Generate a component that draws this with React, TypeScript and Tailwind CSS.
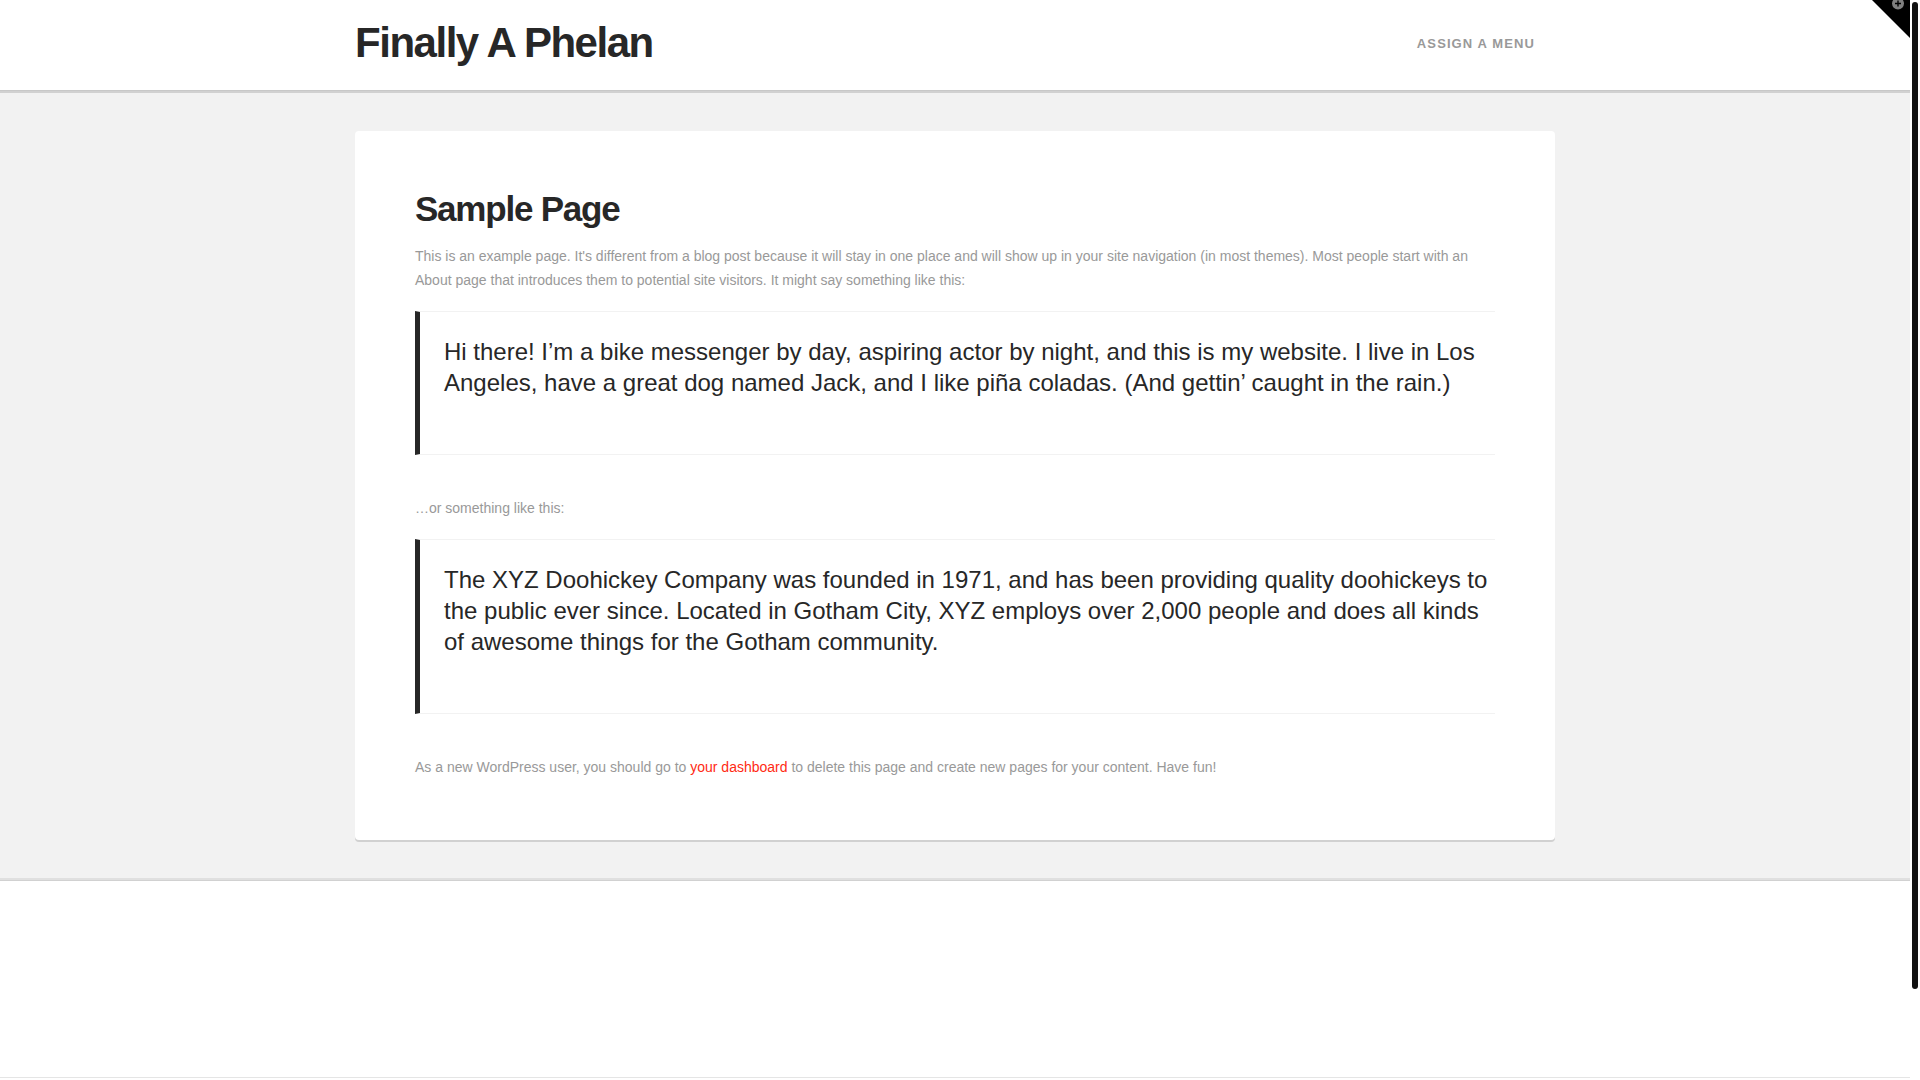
import type { ReactNode } from "react";

function Quote({ children }: { children: ReactNode }) {
  return (
    <blockquote className="mb-[41px] border border-r-0 border-l-[5px] border-[#f2f2f2] border-l-[#272727] pt-6 pb-14 pl-6 text-2xl leading-[31px] text-[#272727]">
      <p>{children}</p>
    </blockquote>
  );
}

function Header() {
  return (
    <header className="border-b border-[#c8c8c8] bg-white">
      <div className="mx-auto flex h-[90px] max-w-[1200px] items-center justify-between pb-1">
        <a href="#home" className="text-[42px] leading-[42px] font-bold tracking-[-0.035em] text-[#272727]">
          Finally A Phelan
        </a>
        <nav className="px-5">
          <a href="#menu" className="text-[13px] font-bold tracking-[0.085em] text-[#999999] uppercase">
            Assign a menu
          </a>
        </nav>
      </div>
    </header>
  );
}

export default function App() {
  return (
    <div className="flex h-screen overflow-hidden bg-white font-['Liberation_Sans',Arial,sans-serif] text-sm leading-6 text-[#999999]">
      <div className="relative min-w-0 flex-1">
        <Header />

        <main className="border-t-2 border-b-2 border-t-[#d1d1d1] border-b-[#e0e0e0] bg-[#f2f2f2] py-[38px]">
          <article className="mx-auto max-w-[1200px] rounded-sm bg-white px-[60px] pt-[60px] pb-[61px] shadow-[0_2px_0_#d1d1d1]">
            <h1 className="mb-[17px] text-[35px] leading-[36px] font-bold tracking-[-0.035em] text-[#272727]">
              Sample Page
            </h1>
            <p className="mb-[19px]">
              This is an example page. It's different from a blog post because it will stay in one place and will show up
              in your site navigation (in most themes). Most people start with an About page that introduces them to
              potential site visitors. It might say something like this:
            </p>
            <Quote>
              Hi there! I’m a bike messenger by day, aspiring actor by night, and this is my website. I live in Los
              Angeles, have a great dog named Jack, and I like piña coladas. (And gettin’ caught in the rain.)
            </Quote>
            <p className="mb-[19px]">…or something like this:</p>
            <Quote>
              The XYZ Doohickey Company was founded in 1971, and has been providing quality doohickeys to the public ever
              since. Located in Gotham City, XYZ employs over 2,000 people and does all kinds of awesome things for the
              Gotham community.
            </Quote>
            <p>
              As a new WordPress user, you should go to{" "}
              <a href="#dashboard" className="text-[#ff2a13]">
                your dashboard
              </a>{" "}
              to delete this page and create new pages for your content. Have fun!
            </p>
          </article>
        </main>

        <footer className="h-[198px] border-t border-b border-t-[#d1d1d1] border-b-[#e5e5e5]" />

        <button type="button" aria-label="Toggle the widgetbar" className="absolute top-0 right-0">
          <svg width="38" height="38" viewBox="0 0 38 38">
            <path d="M0 0H38V38Z" fill="#000" />
            <circle cx="26" cy="3.5" r="6" fill="#7f7f7f" />
            <path d="M23 3.5h6M26 .5v6" stroke="#000" strokeWidth="1.4" />
          </svg>
        </button>
      </div>

      {/* scroll rail */}
      <div className="w-[10px] shrink-0 px-[2px] pt-[2px]">
        <div className="h-[987px] w-[6px] rounded-full bg-[#111111]" />
      </div>
    </div>
  );
}
